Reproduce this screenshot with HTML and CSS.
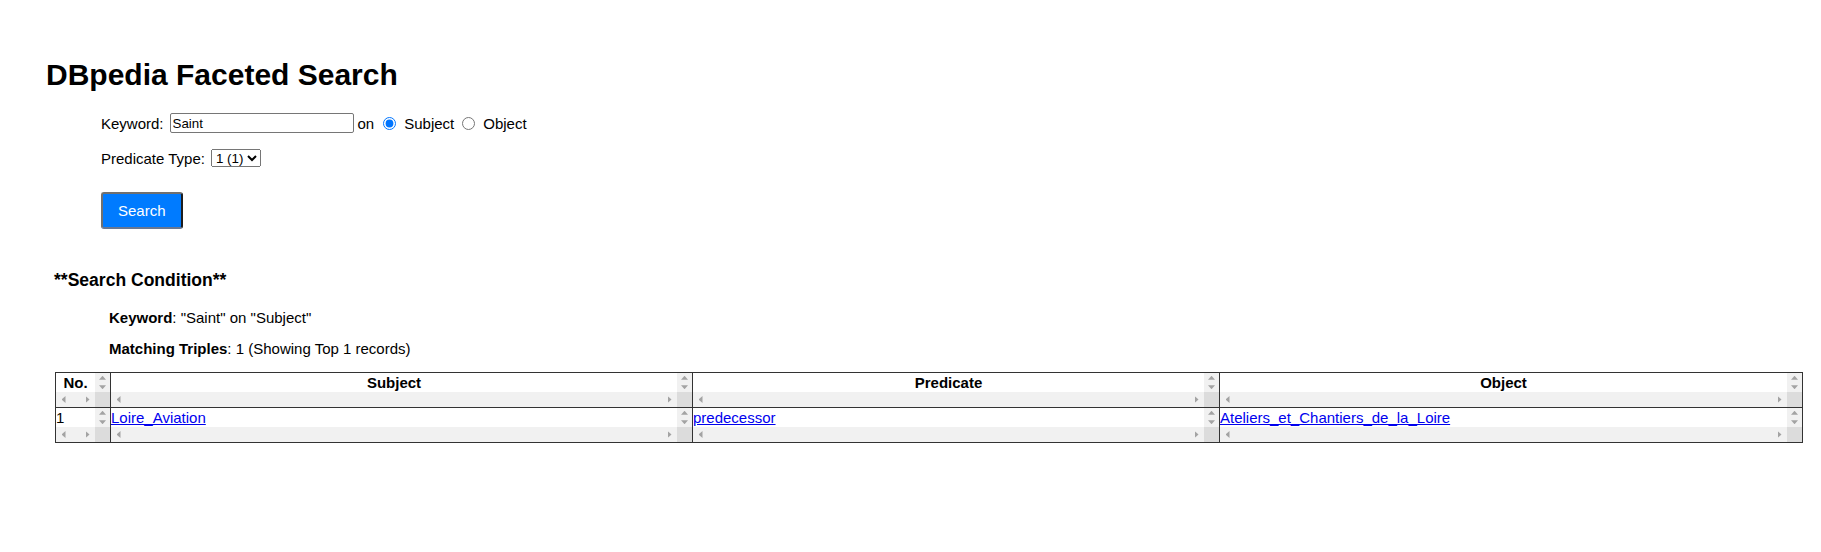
FILE: index.html
```html
<!DOCTYPE html>
<html lang="en">
<head>
<meta charset="utf-8">
<title>DBpedia Faceted Search</title>
<link rel="stylesheet" href="styles.css">
</head>
<body>
<div class="page">
  <h1 class="title">DBpedia Faceted Search</h1>
  <form class="search-form">
    <div class="row row-keyword">
      <span class="label">Keyword:</span>
      <input class="kw-input" type="text" value="Saint">
      <span class="on">on</span>
      <input class="radio radio-first" type="radio" name="pos" checked>
      <span class="radio-label">Subject</span>
      <input class="radio radio-second" type="radio" name="pos">
      <span class="radio-label">Object</span>
    </div>
    <div class="row row-pred">
      <span class="label">Predicate Type:</span>
      <select class="pred-select"><option>1 (1)</option></select>
    </div>
    <button class="search-btn" type="button">Search</button>
  </form>
  <section class="results">
    <h3 class="cond-title">**Search Condition**</h3>
    <p class="cond cond-first"><b>Keyword</b>: "Saint" on "Subject"</p>
    <p class="cond cond-second"><b>Matching Triples</b>: 1 (Showing Top 1 records)</p>
    <table class="triples">
      <tr>
        <th>
          <div class="cell c-no head">
            <div class="cell-body">No.</div>
            <div class="vbar"><span class="btn up"></span><span class="btn down"></span></div>
            <div class="hbar"><span class="btn left"></span><span class="btn right"></span></div>
            <div class="corner"></div>
          </div>
        </th>
        <th>
          <div class="cell c-subj head">
            <div class="cell-body">Subject</div>
            <div class="vbar"><span class="btn up"></span><span class="btn down"></span></div>
            <div class="hbar"><span class="btn left"></span><span class="btn right"></span></div>
            <div class="corner"></div>
          </div>
        </th>
        <th>
          <div class="cell c-pred head">
            <div class="cell-body">Predicate</div>
            <div class="vbar"><span class="btn up"></span><span class="btn down"></span></div>
            <div class="hbar"><span class="btn left"></span><span class="btn right"></span></div>
            <div class="corner"></div>
          </div>
        </th>
        <th>
          <div class="cell c-obj head">
            <div class="cell-body">Object</div>
            <div class="vbar"><span class="btn up"></span><span class="btn down"></span></div>
            <div class="hbar"><span class="btn left"></span><span class="btn right"></span></div>
            <div class="corner"></div>
          </div>
        </th>
      </tr>
      <tr>
        <td>
          <div class="cell c-no">
            <div class="cell-body">1</div>
            <div class="vbar"><span class="btn up"></span><span class="btn down"></span></div>
            <div class="hbar"><span class="btn left"></span><span class="btn right"></span></div>
            <div class="corner"></div>
          </div>
        </td>
        <td>
          <div class="cell c-subj">
            <div class="cell-body"><a href="#">Loire_Aviation</a></div>
            <div class="vbar"><span class="btn up"></span><span class="btn down"></span></div>
            <div class="hbar"><span class="btn left"></span><span class="btn right"></span></div>
            <div class="corner"></div>
          </div>
        </td>
        <td>
          <div class="cell c-pred">
            <div class="cell-body"><a href="#">predecessor</a></div>
            <div class="vbar"><span class="btn up"></span><span class="btn down"></span></div>
            <div class="hbar"><span class="btn left"></span><span class="btn right"></span></div>
            <div class="corner"></div>
          </div>
        </td>
        <td>
          <div class="cell c-obj">
            <div class="cell-body"><a href="#">Ateliers_et_Chantiers_de_la_Loire</a></div>
            <div class="vbar"><span class="btn up"></span><span class="btn down"></span></div>
            <div class="hbar"><span class="btn left"></span><span class="btn right"></span></div>
            <div class="corner"></div>
          </div>
        </td>
      </tr>
    </table>
  </section>
</div>
</body>
</html>
```
FILE: styles.css
```css
html, body {
  margin: 0;
  padding: 0;
  background: #ffffff;
}
body {
  font-family: "Liberation Sans", Arial, sans-serif;
  font-size: 15px;
  color: #000;
}
.page {
  padding: 58px 0 0 46px;
}
.title {
  margin: 0;
  font-size: 30px;
  line-height: 34px;
  font-weight: bold;
}
.search-form {
  margin: 19px 0 0 55px;
  display: flex;
  flex-direction: column;
  align-items: flex-start;
}
.row {
  display: flex;
  align-items: center;
  height: 24px;
  line-height: 17px;
  white-space: nowrap;
}
.row-pred {
  margin-top: 11px;
}
.kw-input {
  margin: 0 0 0 6px;
  box-sizing: border-box;
  width: 184px;
  height: 20px;
  padding: 1px 2px;
  border: 1px solid #767676;
  border-radius: 2px;
  font-family: "Liberation Sans", Arial, sans-serif;
  font-size: 13.333px;
}
.on {
  margin-left: 4px;
}
.radio {
  margin: 0;
  width: 13px;
  height: 13px;
}
.radio-first {
  margin-left: 9px;
}
.radio-second {
  margin-left: 8px;
}
.radio-label {
  margin-left: 8px;
}
.pred-select {
  margin: 0 0 0 6px;
  height: 18px;
  font-family: "Liberation Sans", Arial, sans-serif;
  font-size: 13.333px;
}
.search-btn {
  margin-top: 22px;
  background: #007bff;
  color: #fff;
  font-family: "Liberation Sans", Arial, sans-serif;
  font-size: 15px;
  line-height: 17px;
  padding: 8px 15px;
  border-width: 2px;
  border-style: solid;
  border-color: #707070 #1e1e1e #687792 #707070;
  border-radius: 3px;
  cursor: pointer;
}
.results {
  margin: 41px 0 0 8px;
}
.cond-title {
  margin: 0;
  font-size: 17.55px;
  line-height: 20px;
  font-weight: bold;
}
.cond {
  margin: 0 0 0 55px;
  line-height: 17px;
}
.cond-first {
  margin-top: 19px;
}
.cond-second {
  margin-top: 14px;
}
.triples {
  margin: 15px 0 0 1px;
  border-collapse: collapse;
  border: 1px solid #333;
}
.triples th,
.triples td {
  border: 1px solid #333;
  padding: 0;
  vertical-align: top;
}

/* cell with drawn scrollbars */
.cell {
  display: grid;
  grid-template-columns: 1fr 15px;
  grid-template-rows: 19px 15px;
  height: 34px;
  white-space: nowrap;
}
.cell-body {
  overflow: hidden;
  line-height: 19px;
  text-align: left;
}
.cell.head .cell-body {
  text-align: center;
  font-weight: bold;
}
.vbar {
  background: #f1f1f1;
  display: flex;
  flex-direction: column;
}
.hbar {
  background: #f1f1f1;
  display: flex;
  justify-content: space-between;
}
.corner {
  background: #dcdcdc;
}
.btn {
  display: flex;
  align-items: center;
  justify-content: center;
}
.vbar .btn {
  flex: 1;
}
.hbar .btn {
  width: 15px;
}
.btn::before {
  content: "";
  display: block;
  background: #a3a3a3;
}
.btn.up::before {
  width: 7px;
  height: 4px;
  clip-path: polygon(50% 0, 100% 100%, 0 100%);
}
.btn.down::before {
  width: 7px;
  height: 4px;
  clip-path: polygon(0 0, 100% 0, 50% 100%);
}
.btn.left::before {
  width: 4px;
  height: 7px;
  clip-path: polygon(100% 0, 100% 100%, 0 50%);
}
.btn.right::before {
  width: 4px;
  height: 7px;
  clip-path: polygon(0 0, 100% 50%, 0 100%);
}
.c-no { width: 54px; }
.c-subj { width: 581px; }
.c-pred { width: 526px; }
.c-obj { width: 582px; }
a {
  color: #0000ee;
  text-decoration: underline;
}
```
